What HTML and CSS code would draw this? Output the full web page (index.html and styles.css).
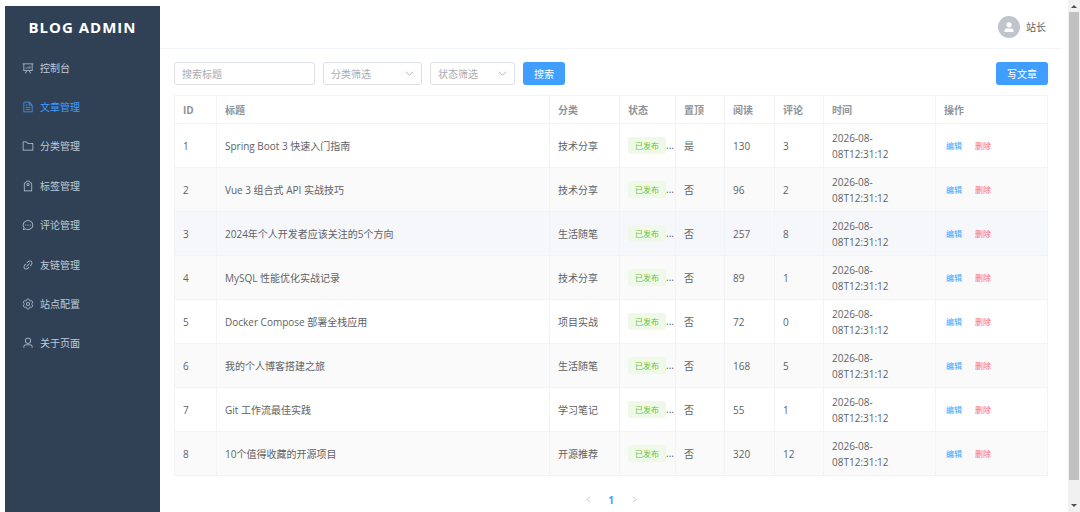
FILE: index.html
```
<!DOCTYPE html>
<html lang="zh-CN">
<head>
  <meta charset="UTF-8">
  <meta name="viewport" content="width=device-width, initial-scale=1">
  <title>BLOG ADMIN</title>
  <link rel="stylesheet" href="styles.css">
</head>
<body>
  <div class="app">
    <aside class="sidebar">
      <h1 class="logo">BLOG ADMIN</h1>
      <nav class="menu">
        <a href="#dashboard"><svg class="icon" viewBox="0 0 1024 1024"><path d="m665.216 768 110.848 192h-73.856L591.36 768H433.024L322.176 960H248.32l110.848-192H160a32 32 0 0 1-32-32V192H64a32 32 0 0 1 0-64h896a32 32 0 1 1 0 64h-64v544a32 32 0 0 1-32 32zM832 192H192v512h640zM352 448a32 32 0 0 1 32 32v64a32 32 0 0 1-64 0v-64a32 32 0 0 1 32-32m160-64a32 32 0 0 1 32 32v128a32 32 0 0 1-64 0V416a32 32 0 0 1 32-32m160-64a32 32 0 0 1 32 32v192a32 32 0 1 1-64 0V352a32 32 0 0 1 32-32"/></svg>控制台</a>
        <a href="#articles" class="active"><svg class="icon" viewBox="0 0 1024 1024"><path d="M832 384H576V128H192v768h640zm-26.496-64L640 154.496V320zM160 64h480l256 256v608a32 32 0 0 1-32 32H160a32 32 0 0 1-32-32V96a32 32 0 0 1 32-32m160 448h384v64H320zm0-192h160v64H320zm0 384h384v64H320z"/></svg>文章管理</a>
        <a href="#categories"><svg class="icon" viewBox="0 0 1024 1024"><path d="M128 192v640h768V320H485.76L357.504 192zm-32-64h287.872l128.384 128H928a32 32 0 0 1 32 32v576a32 32 0 0 1-32 32H96a32 32 0 0 1-32-32V160a32 32 0 0 1 32-32"/></svg>分类管理</a>
        <a href="#tags"><svg class="icon" viewBox="0 0 1024 1024"><path d="M224 318.336V896h576V318.336L552.512 115.84a64 64 0 0 0-81.024 0zM593.024 66.304l259.2 212.096A32 32 0 0 1 864 303.168V928a32 32 0 0 1-32 32H192a32 32 0 0 1-32-32V303.168a32 32 0 0 1 11.712-24.768l259.2-212.096a128 128 0 0 1 162.112 0z"/><path d="M512 448a64 64 0 1 0 0-128 64 64 0 0 0 0 128m0 64a128 128 0 1 1 0-256 128 128 0 0 1 0 256"/></svg>标签管理</a>
        <a href="#comments"><svg class="icon" viewBox="0 0 1024 1024"><path d="m174.72 855.68 135.296-45.12 23.68 11.84C388.096 849.536 448.576 864 512 864c211.84 0 384-166.784 384-352S723.84 160 512 160 128 326.784 128 512c0 69.12 24.96 139.264 70.848 199.232l22.08 28.8-46.272 115.584zm-45.248 82.56A32 32 0 0 1 89.6 896l58.368-145.92C94.72 680.32 64 596.864 64 512 64 299.904 256 96 512 96s448 203.904 448 416-192 416-448 416a461.056 461.056 0 0 1-206.912-48.384l-175.616 58.56z"/><path d="M512 563.2a51.2 51.2 0 1 1 0-102.4 51.2 51.2 0 0 1 0 102.4m192 0a51.2 51.2 0 1 1 0-102.4 51.2 51.2 0 0 1 0 102.4m-384 0a51.2 51.2 0 1 1 0-102.4 51.2 51.2 0 0 1 0 102.4"/></svg>评论管理</a>
        <a href="#links"><svg class="icon" viewBox="0 0 1024 1024"><path d="M715.648 625.152 670.4 579.904l90.496-90.56c75.008-74.944 85.12-186.368 22.656-248.896-62.528-62.464-173.952-52.352-248.96 22.656L444.16 353.6l-45.248-45.248 90.496-90.496c100.032-99.968 251.968-110.08 339.456-22.656 87.488 87.488 77.312 239.424-22.656 339.456l-90.496 90.496zm-90.496 90.496-90.496 90.496C434.624 906.112 282.688 916.224 195.2 828.8c-87.488-87.488-77.312-239.424 22.656-339.456l90.496-90.496 45.248 45.248-90.496 90.56c-75.008 74.944-85.12 186.368-22.656 248.896 62.528 62.464 173.952 52.352 248.96-22.656l90.496-90.496zm0-362.048 45.248 45.248L398.848 670.4 353.6 625.152z"/></svg>友链管理</a>
        <a href="#settings"><svg class="icon icon-line" viewBox="1 1 22 22"><path d="M9.594 3.94c.09-.542.56-.94 1.11-.94h2.593c.55 0 1.02.398 1.11.94l.213 1.281c.063.374.313.686.645.87.074.04.147.083.22.127.325.196.72.257 1.075.124l1.217-.456a1.125 1.125 0 0 1 1.37.49l1.296 2.247a1.125 1.125 0 0 1-.26 1.431l-1.003.827c-.293.241-.438.613-.43.992a7.723 7.723 0 0 1 0 .255c-.008.378.137.75.43.991l1.004.827c.424.35.534.955.26 1.43l-1.298 2.247a1.125 1.125 0 0 1-1.369.491l-1.217-.456c-.355-.133-.75-.072-1.076.124a6.47 6.47 0 0 1-.22.128c-.331.183-.581.495-.644.869l-.213 1.281c-.09.543-.56.94-1.11.94h-2.594c-.55 0-1.019-.398-1.11-.94l-.213-1.281c-.062-.374-.312-.686-.644-.87a6.52 6.52 0 0 1-.22-.127c-.325-.196-.72-.257-1.076-.124l-1.217.456a1.125 1.125 0 0 1-1.369-.49l-1.297-2.247a1.125 1.125 0 0 1 .26-1.431l1.004-.827c.292-.24.437-.613.43-.991a6.932 6.932 0 0 1 0-.255c.007-.38-.138-.751-.43-.992l-1.004-.827a1.125 1.125 0 0 1-.26-1.43l1.297-2.247a1.125 1.125 0 0 1 1.37-.491l1.216.456c.356.133.751.072 1.076-.124.072-.044.146-.086.22-.128.332-.183.582-.495.644-.869l.214-1.28Z"/><circle cx="12" cy="12" r="3"/></svg>站点配置</a>
        <a href="#about"><svg class="icon" viewBox="0 0 1024 1024"><path d="M512 512a192 192 0 1 0 0-384 192 192 0 0 0 0 384m0 64a256 256 0 1 1 0-512 256 256 0 0 1 0 512m320 320v-96a96 96 0 0 0-96-96H288a96 96 0 0 0-96 96v96a32 32 0 1 1-64 0v-96a160 160 0 0 1 160-160h448a160 160 0 0 1 160 160v96a32 32 0 1 1-64 0"/></svg>关于页面</a>
      </nav>
    </aside>

    <div class="main">
      <header class="topbar">
        <span class="avatar"><svg viewBox="0 0 1024 1024"><path d="M288 320a224 224 0 1 0 448 0 224 224 0 1 0-448 0m544 608H160a32 32 0 0 1-32-32v-96a160 160 0 0 1 160-160h448a160 160 0 0 1 160 160v96a32 32 0 0 1-32 32z"/></svg></span>
        <span>站长</span>
      </header>

      <main class="content">
        <form class="toolbar" onsubmit="return false">
          <input type="text" class="field search" placeholder="搜索标题" aria-label="搜索标题">
          <div class="select category">
            <select class="field" aria-label="分类筛选"><option>分类筛选</option></select>
            <svg class="arrow" viewBox="0 0 10 10"><path d="M1 3l4 4 4-4"/></svg>
          </div>
          <div class="select status">
            <select class="field" aria-label="状态筛选"><option>状态筛选</option></select>
            <svg class="arrow" viewBox="0 0 10 10"><path d="M1 3l4 4 4-4"/></svg>
          </div>
          <button type="submit" class="btn">搜索</button>
          <button type="button" class="btn create">写文章</button>
        </form>

        <table>
          <colgroup>
            <col class="c-id"><col><col class="c-cat"><col class="c-status"><col class="c-num"><col class="c-views"><col class="c-num"><col class="c-wide"><col class="c-wide">
          </colgroup>
          <thead>
            <tr><th>ID</th><th>标题</th><th>分类</th><th>状态</th><th>置顶</th><th>阅读</th><th>评论</th><th>时间</th><th>操作</th></tr>
          </thead>
          <tbody>
            <tr><td>1</td><td>Spring Boot 3 快速入门指南</td><td>技术分享</td><td class="state"><span class="tag">已发布</span>...</td><td>是</td><td>130</td><td>3</td><td>2026-08-08T12:31:12</td><td><button class="link">编辑</button><button class="link danger">删除</button></td></tr>
            <tr><td>2</td><td>Vue 3 组合式 API 实战技巧</td><td>技术分享</td><td class="state"><span class="tag">已发布</span>...</td><td>否</td><td>96</td><td>2</td><td>2026-08-08T12:31:12</td><td><button class="link">编辑</button><button class="link danger">删除</button></td></tr>
            <tr class="current"><td>3</td><td>2024年个人开发者应该关注的5个方向</td><td>生活随笔</td><td class="state"><span class="tag">已发布</span>...</td><td>否</td><td>257</td><td>8</td><td>2026-08-08T12:31:12</td><td><button class="link">编辑</button><button class="link danger">删除</button></td></tr>
            <tr><td>4</td><td>MySQL 性能优化实战记录</td><td>技术分享</td><td class="state"><span class="tag">已发布</span>...</td><td>否</td><td>89</td><td>1</td><td>2026-08-08T12:31:12</td><td><button class="link">编辑</button><button class="link danger">删除</button></td></tr>
            <tr><td>5</td><td>Docker Compose 部署全栈应用</td><td>项目实战</td><td class="state"><span class="tag">已发布</span>...</td><td>否</td><td>72</td><td>0</td><td>2026-08-08T12:31:12</td><td><button class="link">编辑</button><button class="link danger">删除</button></td></tr>
            <tr><td>6</td><td>我的个人博客搭建之旅</td><td>生活随笔</td><td class="state"><span class="tag">已发布</span>...</td><td>否</td><td>168</td><td>5</td><td>2026-08-08T12:31:12</td><td><button class="link">编辑</button><button class="link danger">删除</button></td></tr>
            <tr><td>7</td><td>Git 工作流最佳实践</td><td>学习笔记</td><td class="state"><span class="tag">已发布</span>...</td><td>否</td><td>55</td><td>1</td><td>2026-08-08T12:31:12</td><td><button class="link">编辑</button><button class="link danger">删除</button></td></tr>
            <tr><td>8</td><td>10个值得收藏的开源项目</td><td>开源推荐</td><td class="state"><span class="tag">已发布</span>...</td><td>否</td><td>320</td><td>12</td><td>2026-08-08T12:31:12</td><td><button class="link">编辑</button><button class="link danger">删除</button></td></tr>
          </tbody>
        </table>

        <div class="pager">
          <button aria-label="上一页" disabled><svg viewBox="0 0 10 10"><path d="M7 1L3 5l4 4"/></svg></button>
          <button class="on">1</button>
          <button aria-label="下一页" disabled><svg viewBox="0 0 10 10"><path d="M3 1l4 4-4 4"/></svg></button>
        </div>
      </main>
    </div>

    <div class="scrollbar">
      <svg viewBox="0 0 12 12"><path d="M3 8l3-3 3 3z"/></svg>
      <div class="track"><div class="thumb"></div></div>
      <svg viewBox="0 0 12 12"><path d="M3 4l3 3 3-3z"/></svg>
    </div>
  </div>
</body>
</html>
```
FILE: styles.css
```
* { box-sizing: border-box; }
body { margin: 0; background: #fff; color: #606266; font-family: "Open Sans", "Noto Sans CJK SC", sans-serif; font-size: 10px; line-height: 16px; }
button, input, select { font: inherit; }
.app { display: flex; height: 100vh; overflow: hidden; }

/* Sidebar */
.sidebar { width: 155px; flex: none; margin: 6px 0 0 5px; background: #304156; }
.logo { margin: 0; height: 42px; line-height: 42px; text-align: center; color: #fff; font-size: 15px; font-weight: bold; letter-spacing: 1px; }
.menu { display: grid; grid-auto-rows: 1fr; height: 315px; }
.menu a { display: flex; align-items: center; gap: 6px; padding-left: 17px; color: #bfcbd9; text-decoration: none; }
.menu a.active { color: #409eff; }
.icon { width: 12px; height: 12px; fill: currentColor; }
.icon-line { fill: none; stroke: currentColor; stroke-width: 1.5; }

/* Header */
.main { flex: 1; min-width: 0; margin: 6px 6px 0 0; }
.topbar { display: flex; justify-content: flex-end; align-items: center; gap: 6px; height: 43px; padding-right: 16px; border-bottom: 1px solid #f4f5f6; }
.avatar { display: flex; align-items: center; justify-content: center; width: 22px; height: 22px; border-radius: 50%; background: #c0c4cc; }
.avatar svg { width: 12px; height: 12px; fill: #fff; }

/* Filters */
.content { padding: 13px 14px 0; }
.toolbar { display: flex; align-items: center; gap: 8px; margin-bottom: 10px; }
.field { width: 100%; height: 23px; padding: 0 7px; border: 1px solid #dcdfe6; border-radius: 3px; background: #fff; color: #a8abb2; outline: none; appearance: none; }
.field::placeholder { color: #a8abb2; }
.search { width: 141px; }
.select { position: relative; }
.category { width: 99px; }
.status { width: 85px; }
.arrow { position: absolute; right: 8px; top: 7px; width: 9px; height: 9px; pointer-events: none; }
.arrow path, .pager path { fill: none; stroke: #a8abb2; }
.btn { height: 23px; padding: 0 11px; border: 0; border-radius: 3px; background: #409eff; color: #fff; cursor: pointer; }
.create { margin-left: auto; }

/* Article table */
table { width: 100%; table-layout: fixed; border-collapse: collapse; }
.c-id { width: 42px; }
.c-cat { width: 70px; }
.c-status { width: 56px; }
.c-num { width: 49px; }
.c-views { width: 50px; }
.c-wide { width: 112px; }
th, td { border: 1px solid #f1f3f6; padding: 0 8px; text-align: left; }
th { height: 28px; color: #909399; font-weight: bold; }
td { height: 44px; }
tbody tr:nth-child(even) { background: #fafafa; }
tbody tr.current { background: #f5f7fa; }
.state { padding-right: 0; white-space: nowrap; overflow: hidden; }
.tag { display: inline-block; height: 17px; padding: 0 7px; border-radius: 3px; background: #eef9e8; color: #67c23a; font-size: 8px; line-height: 17px; vertical-align: middle; }
.link { padding: 0 2px; margin-right: 9px; border: 0; background: none; color: #409eff; font-size: 8px; cursor: pointer; }
.link.danger { color: #f56c6c; }

/* Pagination */
.pager { display: flex; justify-content: center; margin-top: 12px; }
.pager button { display: flex; align-items: center; justify-content: center; width: 23px; height: 23px; padding: 0; border: 0; background: none; }
.pager svg { width: 7px; height: 7px; }
.pager .on { color: #409eff; font-weight: bold; }

/* Scrollbar */
.scrollbar { display: flex; flex-direction: column; width: 12px; flex: none; background: #f1f1f1; }
.scrollbar svg { width: 12px; height: 12px; fill: #505050; }
.track { flex: 1; padding: 0 1px; }
.thumb { height: 96%; background: #c1c1c1; }
```
